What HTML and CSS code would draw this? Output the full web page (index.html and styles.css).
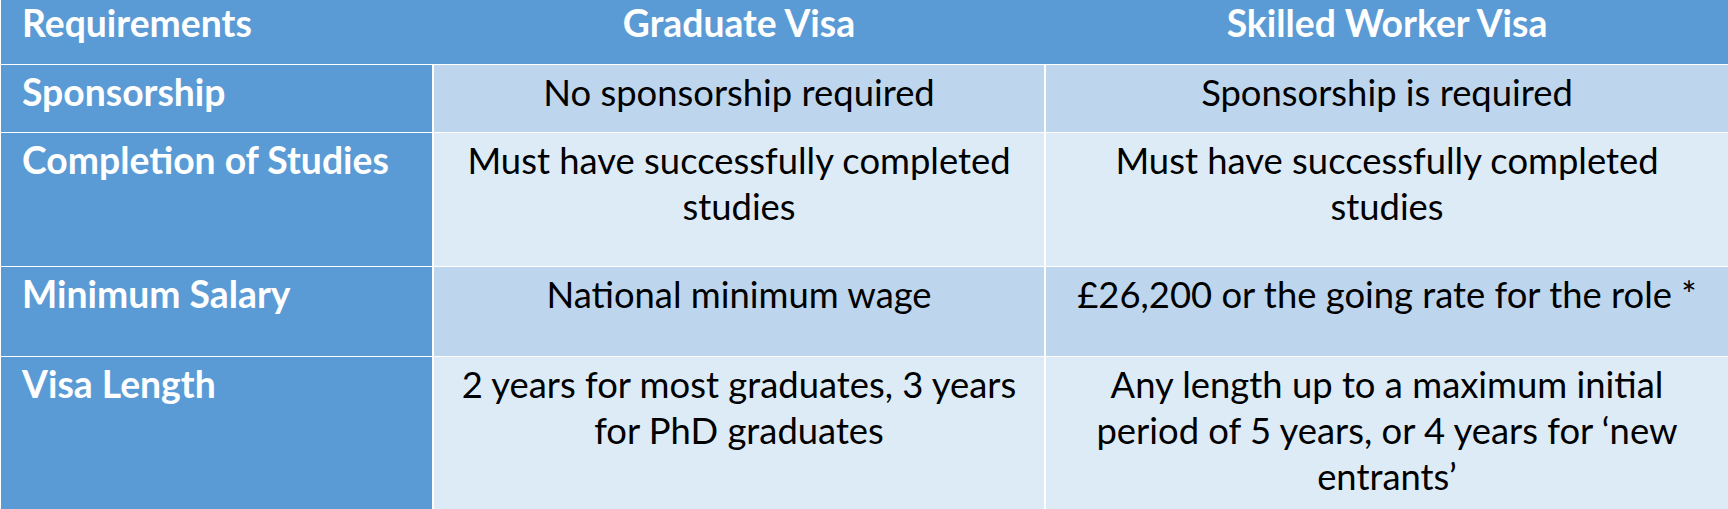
FILE: index.html
```html
<!DOCTYPE html>
<html lang="en">
<head>
<meta charset="utf-8">
<title>Graduate Visa vs Skilled Worker Visa</title>
<link rel="stylesheet" href="styles.css">
</head>
<body>
<div class="table">
  <div class="row head">
    <div class="cell label">Requirements</div>
    <div class="cell">Graduate Visa</div>
    <div class="cell">Skilled Worker Visa</div>
  </div>
  <div class="row band1 r1">
    <div class="cell label">Sponsorship</div>
    <div class="cell">No sponsorship required</div>
    <div class="cell">Sponsorship is required</div>
  </div>
  <div class="row band2 r2">
    <div class="cell label">Completion of Studies</div>
    <div class="cell">Must have successfully completed<br>studies</div>
    <div class="cell">Must have successfully completed<br>studies</div>
  </div>
  <div class="row band1 r3">
    <div class="cell label">Minimum Salary</div>
    <div class="cell">National minimum wage</div>
    <div class="cell">£26,200 or the going rate for the role *</div>
  </div>
  <div class="row band2 r4">
    <div class="cell label">Visa Length</div>
    <div class="cell">2 years for most graduates, 3 years<br>for PhD graduates</div>
    <div class="cell">Any length up to a maximum initial<br>period of 5 years, or 4 years for ‘new<br>entrants’</div>
  </div>
</div>
</body>
</html>
```
FILE: styles.css
```css
html, body {
  margin: 0;
  padding: 0;
  background: #ffffff;
  overflow: hidden;
}
.table {
  display: flex;
  flex-direction: column;
  gap: 1px;
  background: #ffffff;
  padding-left: 1px;
  font-family: "Lato", "Liberation Sans", sans-serif;
  font-size: 36.4px;
  line-height: 46px;
  color: #000000;
}
.row {
  display: grid;
  grid-template-columns: 431px 610px 1fr;
  column-gap: 2px;
}
.cell {
  text-align: center;
  padding: 4px 10px 0;
}
.label {
  text-align: left;
  padding-left: 21px;
  background: #5b9bd5;
  color: #ffffff;
  font-weight: 700;
  font-size: 37.3px;
}
.head {
  height: 64px;
  background: #5b9bd5;
  color: #ffffff;
  font-weight: 700;
  font-size: 37.3px;
}
.head .cell {
  padding-top: 0;
  font-size: 37.3px;
}
.band1 .cell:not(.label) { background: #bdd6ee; }
.band2 .cell:not(.label) { background: #ddebf7; }
.r1 { height: 67px; }
.r2 { height: 133px; }
.r3 { height: 89px; }
.r4 { height: 160px; }
```
